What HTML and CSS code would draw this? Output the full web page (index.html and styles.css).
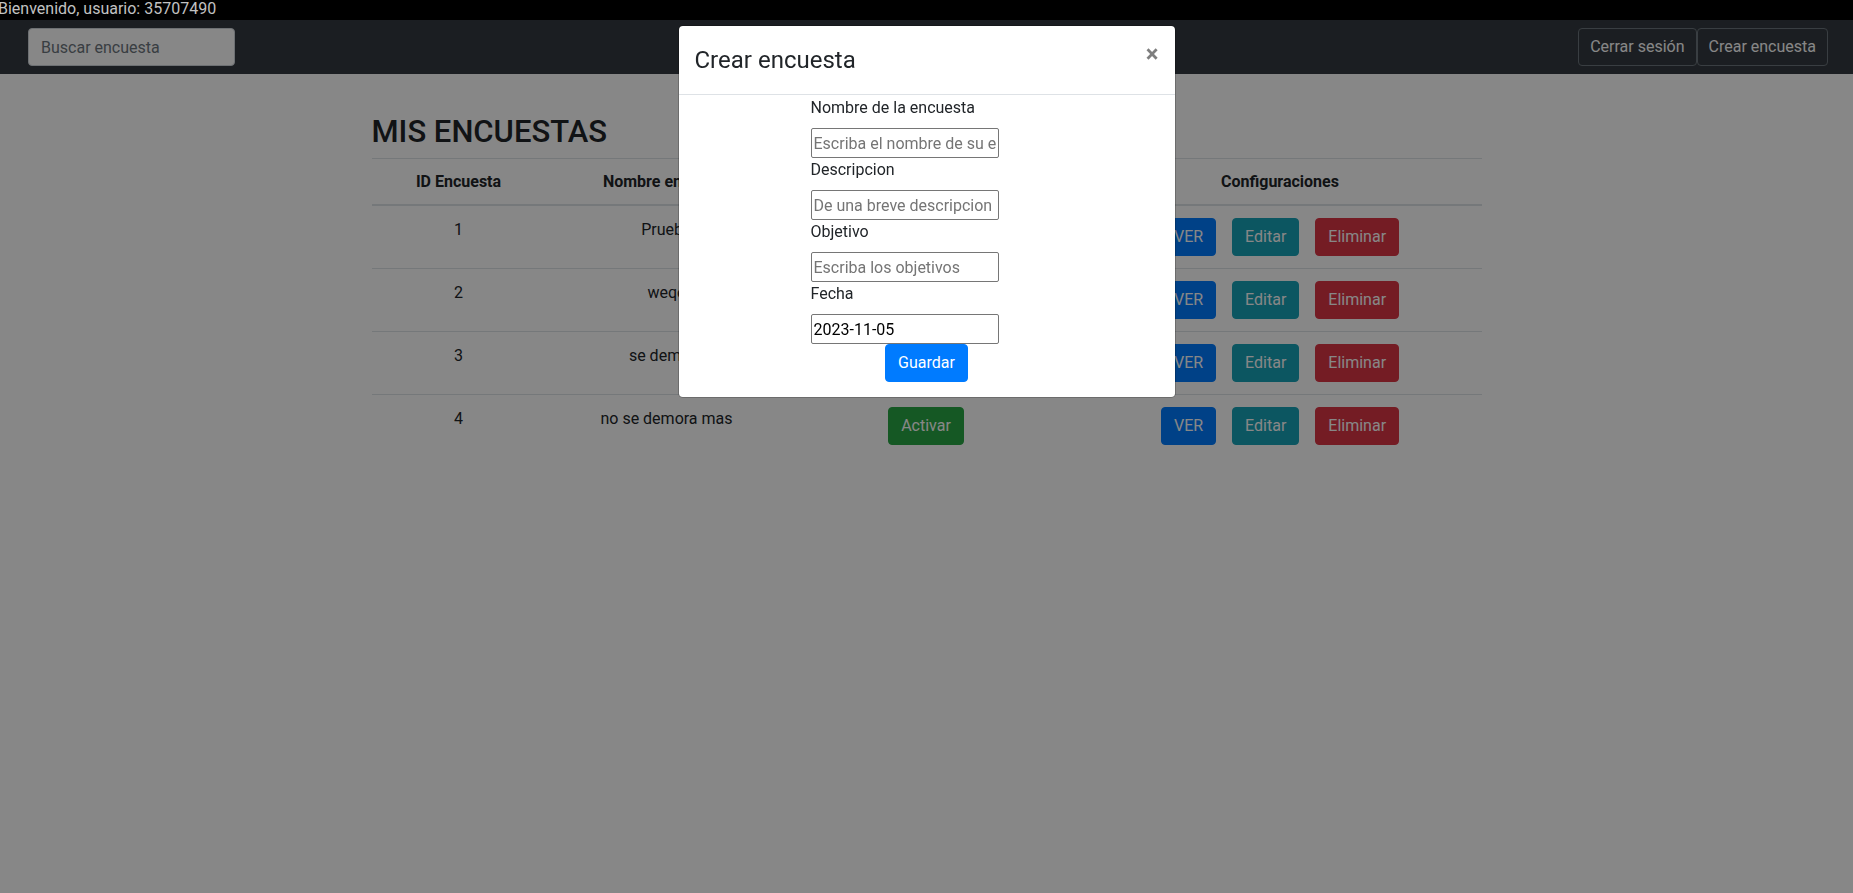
FILE: index.html
```html
<!DOCTYPE html>
<html lang="es">
<head>
<meta charset="utf-8">
<title>Mis encuestas</title>
<link rel="stylesheet" href="styles.css">
</head>
<body>
<div class="topbar"><span class="welcome">Bienvenido, usuario: 35707490</span></div>

<nav class="navbar">
  <input class="search" type="text" placeholder="Buscar encuesta">
  <div class="nav-actions">
    <button class="btn btn-outline">Cerrar sesión</button>
    <button class="btn btn-outline">Crear encuesta</button>
  </div>
</nav>

<main class="container">
  <h2 class="page-title">MIS ENCUESTAS</h2>
  <table class="table">
    <colgroup>
      <col class="c-id"><col class="c-name"><col class="c-state"><col class="c-conf">
    </colgroup>
    <thead>
      <tr><th>ID Encuesta</th><th>Nombre encuesta</th><th class="state">Estado</th><th class="conf">Configuraciones</th></tr>
    </thead>
    <tbody>
      <tr><td>1</td><td>Prueba</td><td class="state"><button class="btn btn-success">Activar</button></td><td class="conf"><div class="actions"><button class="btn btn-primary">VER</button><button class="btn btn-info">Editar</button><button class="btn btn-danger">Eliminar</button></div></td></tr>
      <tr><td>2</td><td>weqe</td><td class="state"><button class="btn btn-success">Activar</button></td><td class="conf"><div class="actions"><button class="btn btn-primary">VER</button><button class="btn btn-info">Editar</button><button class="btn btn-danger">Eliminar</button></div></td></tr>
      <tr><td>3</td><td>se demora</td><td class="state"><button class="btn btn-success">Activar</button></td><td class="conf"><div class="actions"><button class="btn btn-primary">VER</button><button class="btn btn-info">Editar</button><button class="btn btn-danger">Eliminar</button></div></td></tr>
      <tr><td>4</td><td>no se demora mas</td><td class="state"><button class="btn btn-success">Activar</button></td><td class="conf"><div class="actions"><button class="btn btn-primary">VER</button><button class="btn btn-info">Editar</button><button class="btn btn-danger">Eliminar</button></div></td></tr>
    </tbody>
  </table>
</main>

<div class="backdrop"></div>

<div class="modal">
  <div class="modal-dialog">
    <div class="modal-header">
      <h4 class="modal-title">Crear encuesta</h4>
      <button class="close" type="button">&times;</button>
    </div>
    <div class="modal-body">
      <div class="fields">
        <label class="label">Nombre de la encuesta</label>
        <input class="field" type="text" placeholder="Escriba el nombre de su encuesta">
        <label class="label">Descripcion</label>
        <input class="field" type="text" placeholder="De una breve descripcion">
        <label class="label">Objetivo</label>
        <input class="field" type="text" placeholder="Escriba los objetivos">
        <label class="label">Fecha</label>
        <input class="field" type="text" value="2023-11-05">
      </div>
      <button class="btn btn-primary save">Guardar</button>
    </div>
  </div>
</div>
</body>
</html>
```
FILE: styles.css
```css
* { box-sizing: border-box; }
html, body { height: 100%; }
body {
  margin: 0;
  overflow: hidden;
  font-family: Roboto, "Liberation Sans", sans-serif;
  font-size: 16px;
  line-height: 1.5;
  color: #212529;
  background: #fff;
}

/* top welcome strip (sits above the backdrop) */
.topbar {
  position: relative;
  z-index: 1060;
  height: 20px;
  background: #000;
  overflow: hidden;
  white-space: nowrap;
}
.welcome {
  display: block;
  margin-left: -2px;
  line-height: 17px;
  color: #c2c2c2;
}

/* navbar */
.navbar {
  display: flex;
  align-items: center;
  justify-content: space-between;
  height: 54px;
  padding: 8px 25px 8px 28px;
  background: #343a40;
}
.search {
  width: 207px;
  height: 38px;
  padding: 6px 12px;
  font: inherit;
  color: #495057;
  background: #fff;
  border: 1px solid #ced4da;
  border-radius: 4px;
}
.search::placeholder { color: #6c757d; }
.nav-actions { display: flex; }

/* buttons */
.btn {
  display: inline-block;
  padding: 6px 12px;
  font: inherit;
  line-height: 24px;
  color: #fff;
  background: transparent;
  border: 1px solid transparent;
  border-radius: 4px;
  cursor: pointer;
}
.btn-outline { border-color: #6c757d; color: #fff; padding: 6px 11px; }
.btn-primary { background: #007bff; border-color: #007bff; }
.btn-info { background: #17a2b8; border-color: #17a2b8; }
.btn-danger { background: #dc3545; border-color: #dc3545; }
.btn-success { background: #28a745; border-color: #28a745; }

/* page content */
.container {
  width: 1140px;
  margin: 0 auto;
  padding: 39px 15px 0;
}
.page-title {
  margin: 0 0 8px;
  font-size: 31px;
  font-weight: 500;
  line-height: 1.2;
}
.table {
  width: 100%;
  border-collapse: collapse;
  table-layout: fixed;
  text-align: center;
}
.c-id { width: 174px; }
.c-name { width: 242px; }
.c-state { width: 284px; }
.c-conf { width: 410px; }
.table th {
  padding: 11px 12px 10px;
  font-weight: 700;
  border-top: 1px solid #dee2e6;
  border-bottom: 2px solid #dee2e6;
}
.table td {
  padding: 12px;
  vertical-align: top;
  border-top: 1px solid #dee2e6;
}
.table .state { padding-right: 19px; }
.table .conf { padding-left: 19px; }
.actions {
  display: flex;
  justify-content: center;
  gap: 16px;
}

/* modal */
.backdrop {
  position: fixed;
  inset: 0;
  z-index: 1040;
  background: rgba(0, 0, 0, 0.47);
}
.modal {
  position: fixed;
  inset: 0;
  z-index: 1050;
}
.modal-dialog {
  width: 498px;
  margin: 25px auto 0;
  background: #fff;
  border: 1px solid rgba(0, 0, 0, 0.2);
  border-radius: 4.8px;
  background-clip: padding-box;
}
.modal-header {
  display: flex;
  align-items: flex-start;
  justify-content: space-between;
  padding: 16px;
  border-bottom: 1px solid #dee2e6;
}
.modal-title {
  margin: 0;
  font-size: 24px;
  font-weight: 400;
  line-height: 1.5;
}
.close {
  margin: -16px -16px -16px auto;
  padding: 16px;
  font-family: inherit;
  font-size: 24px;
  font-weight: 700;
  line-height: 1;
  color: #000;
  opacity: 0.5;
  background: transparent;
  border: 0;
}
.modal-body {
  display: flex;
  flex-direction: column;
  padding: 1px 16px 15px;
}
.fields {
  display: flex;
  flex-direction: column;
  align-items: flex-start;
  margin-left: 116px;
}
.label {
  margin-bottom: 8px;
  line-height: 24px;
}
.field {
  width: 188px;
  height: 30px;
  padding: 1px 2px;
  font: inherit;
  color: #000;
  border: 1px solid #767676;
  border-radius: 2px;
}
.field::placeholder { color: #757575; }
.save { align-self: center; }
```
